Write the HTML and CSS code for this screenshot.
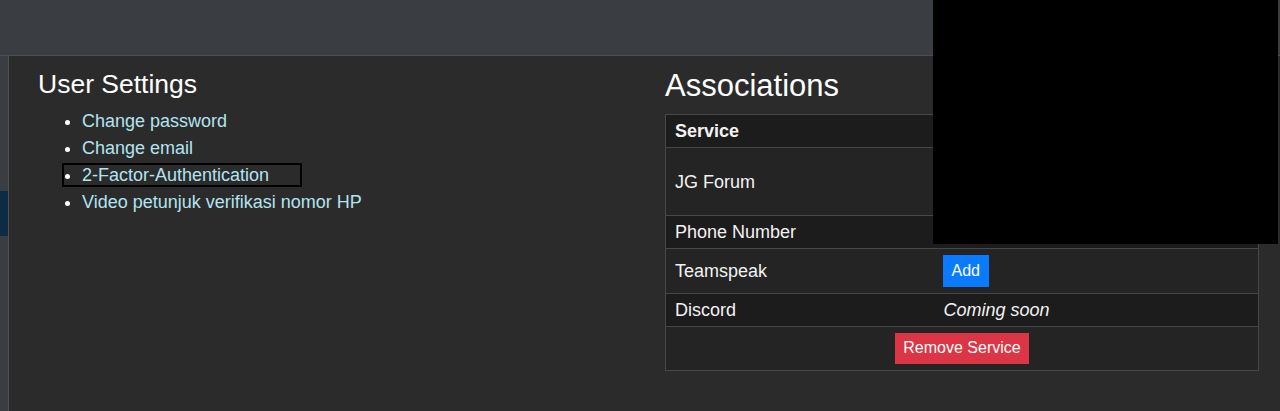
FILE: index.html
```html
<!DOCTYPE html>
<html lang="en">
<head>
<meta charset="utf-8">
<title>User Settings</title>
<link rel="stylesheet" href="styles.css">
</head>
<body>
<header class="topbar"></header>
<div class="layout">
  <nav class="sidebar"><span class="sidebar-active"></span></nav>
  <main class="content">
    <section class="settings">
      <h1 class="settings-title">User Settings</h1>
      <ul class="settings-links">
        <li><a href="#">Change password</a></li>
        <li><a href="#">Change email</a></li>
        <li class="is-focused"><a href="#">2-Factor-Authentication</a></li>
        <li><a href="#">Video petunjuk verifikasi nomor HP</a></li>
      </ul>
    </section>
    <section class="associations">
      <h2 class="associations-title">Associations</h2>
      <table class="assoc-table">
        <colgroup><col class="col-service"><col></colgroup>
        <thead>
          <tr><th>Service</th><th></th></tr>
        </thead>
        <tbody>
          <tr class="row-light"><td>JG Forum</td><td><div class="account-block"></div></td></tr>
          <tr class="row-dark"><td>Phone Number</td><td></td></tr>
          <tr class="row-light"><td class="cell-btn">Teamspeak</td><td class="cell-btn"><button class="btn btn-blue">Add</button></td></tr>
          <tr class="row-dark"><td>Discord</td><td class="cell-note"><em>Coming soon</em></td></tr>
          <tr class="row-light"><td class="cell-btn cell-center" colspan="2"><button class="btn btn-red">Remove Service</button></td></tr>
        </tbody>
      </table>
    </section>
  </main>
</div>
<div class="redaction"></div>
</body>
</html>
```

FILE: styles.css
```css
html, body {
  margin: 0;
  padding: 0;
  height: 100%;
}

body {
  background: #2b2b2b;
  color: #ffffff;
  font-family: "Liberation Sans", Arial, sans-serif;
  overflow: hidden;
}

.topbar {
  height: 55px;
  background: #3a3e42;
  border-bottom: 1px solid #4c5054;
}

.layout {
  display: flex;
  min-height: calc(100vh - 56px);
}

.sidebar {
  width: 8px;
  flex: none;
  background: #3a3e42;
  border-right: 1px solid #4c5054;
}

.sidebar-active {
  display: block;
  margin-top: 135px;
  height: 45px;
  background: #0e2b45;
}

.content {
  flex: 1;
  display: grid;
  grid-template-columns: 627px 594px;
  padding-left: 29px;
  align-items: start;
}

.settings-title {
  margin: 12px 0 0;
  font-size: 26.5px;
  line-height: 32px;
  font-weight: 400;
}

.settings-links {
  margin: 8px 0 0;
  padding-left: 44px;
  font-size: 18px;
  line-height: 27px;
}

.settings-links a {
  color: #b2e4f0;
  text-decoration: none;
}

.settings-links li.is-focused {
  position: relative;
}

.settings-links li.is-focused::after {
  content: "";
  position: absolute;
  left: -20px;
  top: 1px;
  width: 240px;
  height: 24px;
  box-sizing: border-box;
  border: 2px solid #000000;
}

.associations-title {
  margin: 11px 0 0;
  font-size: 31px;
  line-height: 38px;
  font-weight: 400;
}

.assoc-table {
  margin-top: 9px;
  width: 594px;
  border-collapse: collapse;
  border: 1px solid #474747;
  font-size: 18px;
  line-height: 26px;
  color: #f2f2f2;
}

.col-service {
  width: 268px;
}

.assoc-table th,
.assoc-table td {
  padding: 3px 9px;
  text-align: left;
  vertical-align: middle;
  border-top: 1px solid #474747;
}

.assoc-table thead tr {
  background: #1c1c1c;
}

.assoc-table th {
  font-weight: 700;
}

.row-light {
  background: #242424;
}

.row-dark {
  background: #1c1c1c;
}

.account-block {
  height: 61px;
}

.assoc-table td.cell-btn {
  padding-top: 6px;
  padding-bottom: 6px;
}

.assoc-table td.cell-note {
  padding-left: 10px;
}

.assoc-table td.cell-center {
  text-align: center;
}

.assoc-table em {
  font-style: italic;
}

.btn {
  font-family: "Liberation Sans", Arial, sans-serif;
  font-size: 16px;
  line-height: 24px;
  color: #ffffff;
  border: none;
  border-radius: 0;
  padding: 4px 9px;
  vertical-align: middle;
}

.btn-blue {
  background: #0a7bff;
}

.btn-red {
  background: #dc3545;
  padding: 3px 8px 4px;
}

.redaction {
  position: absolute;
  left: 933px;
  top: 0;
  width: 345px;
  height: 244px;
  background: #000000;
}
```
